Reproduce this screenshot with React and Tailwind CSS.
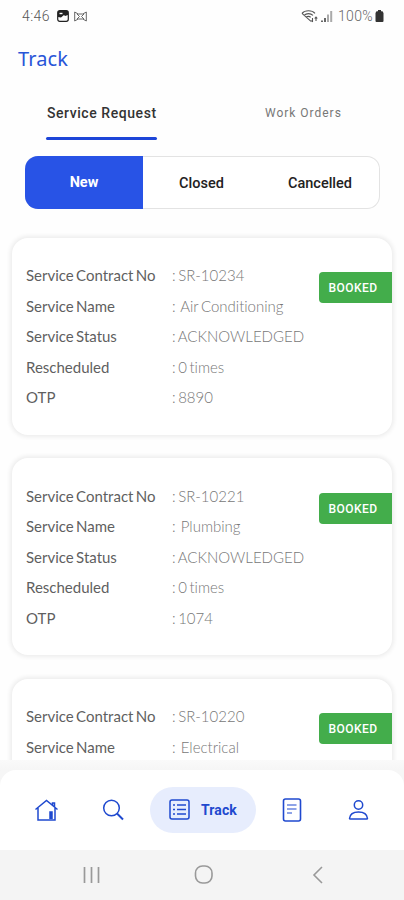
import React from "react";

const requests = [
  { id: "SR-10234", name: "Air Conditioning", otp: "8890" },
  { id: "SR-10221", name: "Plumbing", otp: "1074" },
  { id: "SR-10220", name: "Electrical" },
];

function StatusBar() {
  return (
    <header className="flex h-8 shrink-0 items-center justify-between pl-[22px] pr-5 text-[#666]">
      <div className="flex items-center">
        <span className="w-[29px] whitespace-nowrap text-[14px] font-light tracking-[0.4px] text-[#555]">4:46</span>
        <svg className="ml-[6px]" width="12" height="12" viewBox="0 0 12 12" fill="none" stroke="#222">
          <rect x="0.7" y="0.7" width="10.6" height="10.6" rx="2" strokeWidth="1.2" />
          <path d="M1 1h10v4L8 6 7 5 4 7.500 1 7z" fill="#222" stroke="none" />
          <path d="M2.500 3.500h3" stroke="#fff" strokeWidth="1.400" />
        </svg>
        <svg className="ml-[5px]" width="13" height="11" viewBox="0 0 13 11" fill="none" stroke="#666" strokeWidth="1">
          <path d="M.7 1v9M12.3 1v9M.7 1l3.5 2h4.6l3.5-2M.7 10l3.5-2h4.6l3.5 2M3 3l2.5 2.5L3 8M10 3 7.500 5.500 10 8" />
        </svg>
      </div>
      <div className="flex items-center">
        <svg width="17" height="14" viewBox="0 0 17 14" fill="none" stroke="#555" strokeWidth="1.1">
          <path d="M1 4.300C4 .8 11 .8 14 4.300M3 6.300c2.500-2.300 6.500-2.300 9 0M5.200 8.300c1.500-1.200 3-1.200 4.500 0M1 4.300l9 8" />
          <path d="M11.500 13V9m-1.300 2.500L11.500 13M15 8v4m-1.300-2.500L15 8l1.300 1.500" />
        </svg>
        <svg className="ml-[3px]" width="12" height="11" viewBox="0 0 12 11">
          <path d="M0 11V9.500h2V11zM3 11V7h2v4z" fill="#666" />
          <path d="M6 11V3.500h2V11zM9.200 11V0h2v11z" fill="#aaa" />
        </svg>
        <span className="ml-[5px] w-[36px] whitespace-nowrap text-[14px] font-light tracking-[0.3px] text-[#666]">100%</span>
        <svg className="ml-px" width="9" height="12" viewBox="0 0 9 12" fill="#333">
          <path d="M3 0h3v1.200h1.500L8.500 3v8q0 1-1 1h-6q-1 0-1-1V3l1-1.800H3z" />
        </svg>
      </div>
    </header>
  );
}

function Row({ label, value }) {
  return (
    <div className="flex h-[30.500px] items-center whitespace-pre text-[15px] leading-[20px] [font-variant-ligatures:none] [word-spacing:-1.5px]">
      <dt className="w-[146px] text-[#5f5f5f]">{label}</dt>
      <dd className="font-light text-[#777]">{value}</dd>
    </div>
  );
}

function RequestCard({ request }) {
  return (
    <article className="mx-3 flex h-[197px] shrink-0 items-start justify-between rounded-2xl bg-white shadow-[0_0_4px_2px_rgba(0,0,0,0.070)]">
      <dl className="pl-[14px] pt-[22.500px] font-['Lato',sans-serif]">
        <Row label="Service Contract No" value={": " + request.id} />
        <Row label="Service Name" value={":  " + request.name} />
        {request.otp && (
          <>
            <Row label="Service Status" value=": ACKNOWLEDGED" />
            <Row label="Rescheduled" value=": 0 times" />
            <Row label="OTP" value={": " + request.otp} />
          </>
        )}
      </dl>
      <span className="mt-[34.500px] flex h-[31px] w-[73px] items-center rounded-l-[4px] bg-[#43ad4b] pl-[9.500px] pt-px text-[12px] font-medium tracking-[0.450px] text-white">
        BOOKED
      </span>
    </article>
  );
}

function BottomNav() {
  return (
    <nav className="flex h-20 w-full items-center rounded-t-2xl bg-white text-[#1f49cf]">
      <svg className="ml-[34px]" width="25" height="24" viewBox="0 0 25 24" fill="none" stroke="currentColor" strokeWidth="1.500">
        <path d="M1.500 11.500 12.500 2.500 23.500 11.500M4 10v12h17V10M18.500 7V5h2v4" />
        <path d="M16 21v-7h2v7" fill="currentColor" />
      </svg>
      <svg className="ml-[43px]" width="23" height="23" viewBox="0 0 23 23" fill="none" stroke="currentColor" strokeWidth="1.500">
        <circle cx="9.500" cy="9" r="7.800" />
        <path d="m15 14.500 6 6" strokeWidth="2" />
      </svg>
      <div className="ml-[25px] flex h-[46px] w-[106px] items-center rounded-full bg-[#e7edfd] pl-[19px]">
        <svg className="-mt-px" width="21" height="21" viewBox="0 0 21 21" fill="none" stroke="currentColor" strokeWidth="1.500">
          <rect x="1" y="1" width="19" height="19" rx="2" />
          <path d="M4 6h2M8 6h9M4 10.500h2m2 0h9M4 15h2m2 0h9" />
        </svg>
        <span className="ml-[11px] text-[14px] font-bold tracking-[0.1px]">Track</span>
      </div>
      <svg className="-mt-px ml-[26px]" width="20" height="24" viewBox="0 0 20 24" fill="none" stroke="currentColor" strokeWidth="1.600">
        <rect x="1.500" y="1" width="17" height="22" rx="2" />
        <path d="M5 7h9.500M5 11h9.500M5 15h5" strokeWidth="1.100" />
      </svg>
      <svg className="ml-[46px]" width="21" height="22" viewBox="0 0 21 22" fill="none" stroke="currentColor" strokeWidth="1.500">
        <circle cx="10.500" cy="6" r="4.200" />
        <path d="M1.500 19.500C2 15 6 13 10.500 13s8.500 2 9 6.500q0 .5-1 .5h-16q-1 0-1-.5Z" />
      </svg>
    </nav>
  );
}

export default function App() {
  return (
    <div className="flex h-[900px] w-[404px] flex-col overflow-hidden bg-[#fefefe] font-['Roboto',sans-serif]">
      <StatusBar />
      <h1 className="flex h-[53px] shrink-0 items-center pl-[18px] font-['Noto_Sans',sans-serif] text-[20px] tracking-[0.1px] text-[#2855d8]">
        Track
      </h1>
      <div className="flex h-[55px] shrink-0">
        <div className="ml-[46px] flex w-[111px] flex-col justify-between">
          <span className="mt-[18px] whitespace-nowrap pl-px text-[14px] font-medium tracking-[0.560px] text-[#333]">Service Request</span>
          <span className="h-[3px] rounded-full bg-[#1d45d8]" />
        </div>
        <span className="ml-[108px] mt-[19px] whitespace-nowrap text-[12px] tracking-[0.980px] text-[#777]">Work Orders</span>
      </div>
      <div className="ml-[25px] mt-4 flex h-[53px] w-[355px] shrink-0 overflow-hidden rounded-[13px] bg-white text-[14.500px] font-medium text-[#222] shadow-[inset_0_0_0_1px_#e3e3e3]">
        <button className="w-[118px] bg-[#2853e6] pt-px font-bold text-white">New</button>
        <button className="w-[117px] pt-[2px]">Closed</button>
        <button className="w-[120px] pt-[2px]">Cancelled</button>
      </div>
      <main className="mt-[20px] flex min-h-0 flex-1 flex-col gap-[23.500px] overflow-hidden pt-[8.500px]">
        {requests.map((request) => (
          <RequestCard key={request.id} request={request} />
        ))}
      </main>
      <div className="shrink-0 bg-gradient-to-b from-[#fafafa] to-[#f6f6f6] to-10% pt-[10px]">
        <BottomNav />
      </div>
      <footer className="flex h-[50px] shrink-0 items-center bg-[#f4f4f4] pb-px">
        <svg className="ml-[83px]" width="17" height="16" viewBox="0 0 17 16" stroke="#999" strokeWidth="1.700">
          <path d="M1.500 0v16M8.500 0v16M15.500 0v16" />
        </svg>
        <svg className="ml-[94px]" width="20" height="19" viewBox="0 0 20 19" fill="none" stroke="#999" strokeWidth="1.600">
          <rect x="1.500" y="1" width="16.500" height="17" rx="7" />
        </svg>
        <svg className="ml-[98px]" width="12" height="18" viewBox="0 0 12 18" fill="none" stroke="#999" strokeWidth="1.600">
          <path d="M10 1 2 9l8 8" />
        </svg>
      </footer>
    </div>
  );
}
